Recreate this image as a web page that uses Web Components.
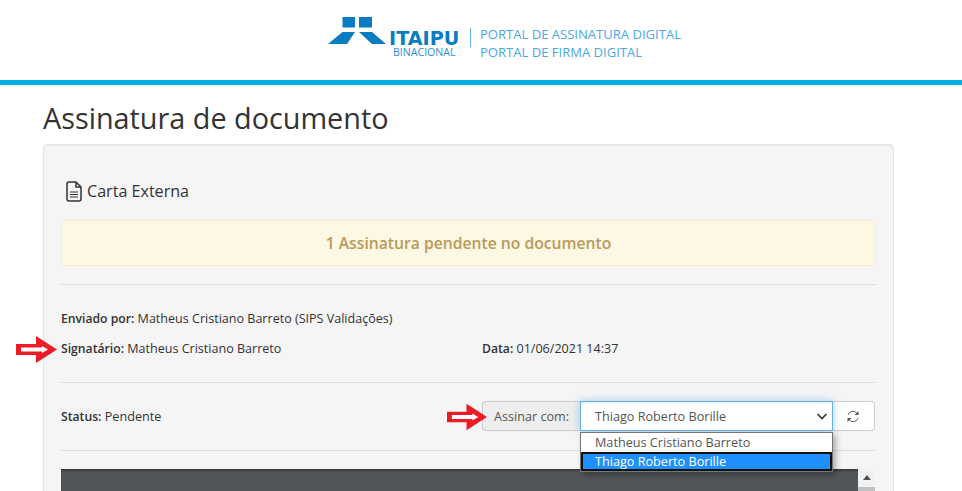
<!DOCTYPE html>
<html lang="pt"><head><meta charset="utf-8"><title>Assinatura de documento</title>
<style>
html,body{margin:0;height:491px;overflow:hidden;background:#fff;font-family:"Open Sans","Noto Sans",sans-serif;color:#333}
</style></head><body>
<portal-header></portal-header>
<main-page>
  <h-title slot="title">Assinatura de documento</h-title>
  <doc-card>
    <doc-name>Carta Externa</doc-name>
    <alert-box>1 Assinatura pendente no documento</alert-box>
    <h-rule></h-rule>
    <info-rows></info-rows>
    <h-rule></h-rule>
    <status-row></status-row>
    <h-rule></h-rule>
    <pdf-view></pdf-view>
  </doc-card>
</main-page>
<script>
function def(name, html){
  customElements.define(name, class extends HTMLElement{
    constructor(){super();this.attachShadow({mode:"open"}).innerHTML=html;}
  });
}
const arrow=(cls,w,h)=>`<svg class="${cls}" width="${w}" height="${h}" viewBox="0 0 41 27" aria-hidden="true"><path d="M0 8H20V0L41 13.500 20 27V19H0Z" fill="#ed1c24"/><path d="M5 11.500H26V10L32 13.500 26 17V15.500H5Z" fill="#fff"/></svg>`;
def("portal-header",`<style>
:host{display:flex;align-items:flex-start;box-sizing:border-box;height:85px;padding:16px 0 0 328px;border-bottom:5px solid #00b0e0;background:#fff}
.mark{width:142px;flex:none;height:42px;position:relative}
svg{display:block}
.it{position:absolute;left:61px;top:15px;font:700 19.200px/15px "DejaVu Sans",sans-serif;color:#0a7cc2}
.bi{position:absolute;left:65px;top:31px;font:400 10.600px/11px "Open Sans",sans-serif;color:#2f8fd0}
.sep{flex:none;width:1px;height:19px;margin-top:12px;background:#5ab2e6}
.txt{margin-left:9px;margin-top:9px;font:400 13.050px/18px "Open Sans",sans-serif;color:#4aa8e4;white-space:nowrap}
</style>
<div class="mark"><svg width="70" height="28" viewBox="0 0 70 28"><path fill="#0a7cc2" d="M14.500 1H27V11.500H14.500ZM31 1H44V11.500H31ZM14.500 16H27L19 28H0ZM31 16H44L58 28H44Z"/></svg><span class="it">ITAIPU</span><span class="bi">BINACIONAL</span></div>
<div class="sep"></div>
<div class="txt"><div>PORTAL DE ASSINATURA DIGITAL</div><div>PORTAL DE FIRMA DIGITAL</div></div>`);
def("main-page",`<style>:host{display:block;height:406px;overflow:hidden;padding:0 68px 0 43px}</style><slot name="title"></slot><slot></slot>`);
def("h-title",`<style>:host{display:block;font:400 28.800px/40px "Open Sans",sans-serif;color:#333;padding:13px 0 6px 0;white-space:nowrap}</style><slot></slot>`);
def("doc-card",`<style>:host{display:block;box-sizing:border-box;background:#f5f5f5;border:1px solid #e3e3e3;border-radius:4px;padding:28px 17px 19px;box-shadow:inset 0 1px 1px rgba(0,0,0,.05);height:400px}</style><slot></slot>`);
def("doc-name",`<style>:host{display:flex;align-items:center;gap:5px;height:36px;padding-left:5px;font:400 16.100px/22px "Open Sans",sans-serif;color:#333}
svg{flex:none}</style><svg width="16" height="21" viewBox="0 0 16 21" fill="none" stroke="#333" stroke-width="1.500"><path d="M3 1H10L15 6V18A2 2 0 0 1 13 20H3A2 2 0 0 1 1 18V3A2 2 0 0 1 3 1Z"/><path d="M10 1V6H15" /><path stroke-width="1.100" d="M4 11H12M4 13.500H12M4 16H12"/></svg><slot></slot>`);
def("alert-box",`<style>:host{display:block;box-sizing:border-box;margin-top:11px;height:46px;background:#fcf8e3;border:1px solid #faebcc;border-radius:4px;text-align:center;font:600 15.700px/44px "Open Sans",sans-serif;color:#b99a5b}</style><slot></slot>`);
def("h-rule",`<style>:host{display:block;height:1px;background:#ddd;margin-top:18px}</style>`);
def("info-rows",`<style>:host{display:grid;grid-template-columns:421px 1fr;grid-auto-rows:30px;padding-top:19px;height:60px;font:400 12.550px/30px "Open Sans",sans-serif;color:#333;white-space:nowrap}
b{font-weight:600;font-size:12.200px}.sig{position:relative}svg{position:absolute;left:-45px;top:2px}.full{grid-column:1/3}</style>
<div class="full"><b>Enviado por:</b> Matheus Cristiano Barreto (SIPS Validações)</div>
<div class="sig">${arrow("a",41,27)}<b>Signatário:</b> Matheus Cristiano Barreto</div>
<div><b>Data:</b> 01/06/2021 14:37</div>`);
def("status-row",`<style>:host{display:flex;align-items:center;justify-content:space-between;height:30px;margin-top:18px;margin-bottom:19px;font:400 12.650px/20px "Open Sans",sans-serif;color:#333}
b{font-weight:600;font-size:12.200px}.grp{display:flex;position:relative;height:30px;margin-right:1px}
.add{box-sizing:border-box;width:98px;background:#eee;border:1px solid #ccc;border-right:0;border-radius:4px 0 0 4px;padding-left:11px;line-height:28px;color:#555}
.sel{box-sizing:border-box;width:253px;border:1px solid #66afe9;background:#fff;padding-left:14px;line-height:28px;color:#555;box-shadow:inset 0 1px 1px rgba(0,0,0,.075),0 0 8px rgba(102,175,233,.6);position:relative;z-index:1;display:flex;align-items:center;justify-content:space-between}
.sel svg{margin-right:0}
.btn{box-sizing:border-box;width:42px;background:#fff;border:1px solid #ccc;border-left:0;border-radius:0 4px 4px 0;display:flex;align-items:center;justify-content:center;padding-right:1px}
.arr{position:absolute;left:-35px;top:2px}
.menu{position:absolute;left:98px;top:31px;width:253px;box-sizing:border-box;z-index:2;background:#fff;border:1px solid #767676;box-shadow:3px 3px 6px rgba(0,0,0,.3);color:#555;line-height:19px}
.menu div{box-sizing:border-box;height:19px;padding-left:14px}
.menu .on{background:#1e90ff;color:#fff;border:2px solid #111;line-height:15px;padding-left:12px}
</style><div><b>Status:</b> Pendente</div>
<div class="grp">${arrow("arr",40,28)}
<div class="add">Assinar com:</div>
<div class="sel"><span>Thiago Roberto Borille</span><svg width="20" height="10" viewBox="0 0 20 10" fill="none" stroke="#333" stroke-width="1.600"><path d="M5.500 3L10 7.500 14.500 3"/></svg></div>
<div class="btn"><svg width="14" height="13" viewBox="0 0 14 13" fill="none" stroke="#555" stroke-width=".9"><path d="M2 5A5 5 0 0 1 11 3.500M12 8A5 5 0 0 1 3 9.500"/><path fill="#555" stroke="none" d="M12.500 1V5H8.500ZM1.500 12V8H5.500Z"/></svg></div>
<div class="menu"><div>Matheus Cristiano Barreto</div><div class="on">Thiago Roberto Borille</div></div></div>`);
def("pdf-view",`<style>:host{display:flex;justify-content:flex-end;height:60px;margin-top:18px;margin-right:1px;background:#525659;box-shadow:inset 0 2px 2px rgba(0,0,0,.3)}
.sb{width:17px;background:#f1f1f1;display:flex;flex-direction:column;align-items:center}
.up{width:0;height:0;margin-top:6px;border:4px solid transparent;border-top:0;border-bottom:5px solid #505050}
.th{width:17px;height:30px;margin-top:7px;background:#c1c1c1}</style><div class="sb"><div class="up"></div><div class="th"></div></div>`);
</script>
</body></html>
